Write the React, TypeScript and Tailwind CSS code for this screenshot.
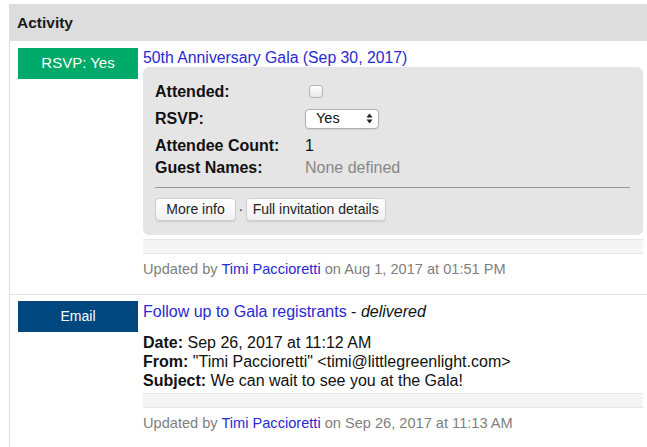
import React from "react";

const font = { fontFamily: '"Liberation Sans", Arial, Helvetica, sans-serif' };

function Badge({ label, color, size }: { label: string; color: string; size: string }) {
  return (
    <div className={`flex h-[31px] w-[120px] shrink-0 items-center justify-center text-white ${color} ${size}`}>
      {label}
    </div>
  );
}

function Strip() {
  return <div className="h-[15px] border-y border-[#e6e6e6] bg-[#f5f5f5]" />;
}

function Updated({ when }: { when: string }) {
  return (
    <div className="mt-[5px] text-[14.6px] leading-[20px] text-[#808080]">
      Updated by <span className="text-[#2a2ad0]">Timi Paccioretti</span> on {when}
    </div>
  );
}

export default function App() {
  return (
    <div style={font} className="h-[447px] w-[647px] overflow-hidden bg-white pl-[9px] pt-[4px] text-[#111]">
      <div className="flex h-[37px] items-center bg-[#dddddd] pl-[8px] text-[15.5px] font-bold text-[#1a1a1a]">
        Activity
      </div>

      <div className="border-l border-[#dedede]">
        {/* RSVP row */}
        <div className="flex gap-[5px] border-b border-[#e2e2e2] pb-[15px] pl-[8px] pr-[4px] pt-[7px]">
          <Badge label="RSVP: Yes" color="bg-[#00aa6a]" size="text-[15px]" />
          <div className="flex-1">
            <div className="pt-[1px] text-[15.8px] leading-[18px] text-[#2a2ad0]">50th Anniversary Gala (Sep 30, 2017)</div>
            <div className="rounded-[6px] bg-[#e5e5e5] pb-[14px] pl-[12px] pr-[13px] pt-[11px]">
              <div className="grid grid-cols-[150px_1fr] text-[16px]">
                <div className="flex h-[27px] items-center font-bold">Attended:</div>
                <div className="flex h-[27px] items-center">
                  <div className="ml-[4px] h-[13px] w-[14px] rounded-[3px] border border-[#b5b5b5] bg-gradient-to-b from-[#fdfdfd] to-[#e8e8e8]" />
                </div>
                <div className="flex h-[27px] items-center font-bold">RSVP:</div>
                <div className="flex h-[27px] items-center">
                  <div className="flex h-[20px] w-[74px] items-center justify-between rounded-[4px] border border-[#b0b0b0] bg-white pl-[10px] pr-[5px] text-[14.5px] shadow-[0_1px_1px_rgba(0,0,0,0.08)]">
                    <span>Yes</span>
                    <svg width="7" height="11" viewBox="0 0 7 11">
                      <path d="M3.5 0.5 L6.5 4.5 H0.5 Z" fill="#222" />
                      <path d="M3.5 10.5 L6.5 6.5 H0.5 Z" fill="#222" />
                    </svg>
                  </div>
                </div>
                <div className="flex h-[27px] items-center font-bold">Attendee Count:</div>
                <div className="flex h-[27px] items-center">1</div>
                <div className="flex h-[18px] items-center font-bold">Guest Names:</div>
                <div className="flex h-[18px] items-center text-[#888]">None defined</div>
              </div>
              <div className="mt-[10px] h-px bg-[#9a9a9a]" />
              <div className="mt-[10px] flex items-center text-[14px]">
                <button className="h-[23px] w-[81px] rounded-[4px] border border-[#cfcfcf] bg-gradient-to-b from-white to-[#f1f1f1] text-[#222] shadow-[0_1px_1px_rgba(0,0,0,0.1)]">
                  More info
                </button>
                <span className="mx-[2.5px] text-[#333]">·</span>
                <button className="h-[23px] w-[140px] rounded-[4px] border border-[#cfcfcf] bg-gradient-to-b from-white to-[#f1f1f1] text-[#222] shadow-[0_1px_1px_rgba(0,0,0,0.1)]">
                  Full invitation details
                </button>
              </div>
            </div>
            <div className="mt-[4px]">
              <Strip />
            </div>
            <Updated when="Aug 1, 2017 at 01:51 PM" />
          </div>
        </div>

        {/* Email row */}
        <div className="flex gap-[5px] pb-[17px] pl-[8px] pr-[4px] pt-[6px]">
          <Badge label="Email" color="bg-[#00467f]" size="text-[14px]" />
          <div className="flex-1">
            <div className="pt-[2px] text-[16px] leading-[18px]">
              <span className="text-[#2a2ad0]">Follow up to Gala registrants</span> - <span className="italic">delivered</span>
            </div>
            <div className="mt-[12px] text-[16px] leading-[19px]">
              <div>
                <span className="font-bold">Date:</span> Sep 26, 2017 at 11:12 AM
              </div>
              <div>
                <span className="font-bold">From:</span> "Timi Paccioretti" &lt;timi@littlegreenlight.com&gt;
              </div>
              <div>
                <span className="font-bold">Subject:</span> We can wait to see you at the Gala!
              </div>
            </div>
            <div className="mt-[3px]">
              <Strip />
            </div>
            <Updated when="Sep 26, 2017 at 11:13 AM" />
          </div>
        </div>
      </div>
    </div>
  );
}
